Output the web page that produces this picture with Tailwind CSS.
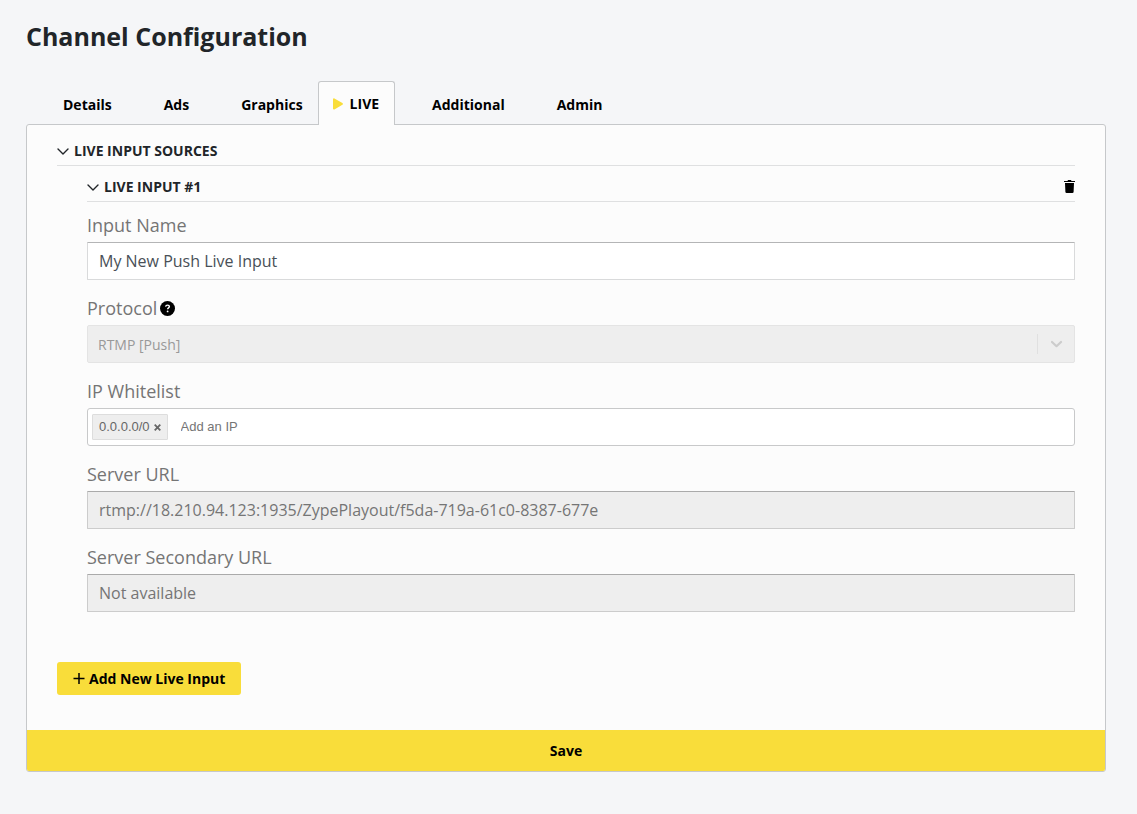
<!DOCTYPE html>
<html lang="en">
<head>
<meta charset="utf-8">
<meta name="viewport" content="width=device-width, initial-scale=1">
<title>Channel Configuration</title>
<script src="https://cdn.jsdelivr.net/npm/@tailwindcss/browser@4"></script>
</head>
<body class="min-h-screen bg-[#f5f6f8] font-['Open_Sans',sans-serif] text-sm text-[#212529]">
<main class="pt-5 pr-[31px] pb-10 pl-[26px]">
  <h1 class="text-[25px] leading-8 font-bold">Channel Configuration</h1>

  <nav class="relative z-10 mt-[29px] -mb-px flex items-end" aria-label="Channel sections">
    <a href="#details" class="ml-[22px] px-[15px] pb-2 leading-6 font-bold text-black">Details</a>
    <a href="#ads" class="ml-[22px] px-[15px] pb-2 leading-6 font-bold text-black">Ads</a>
    <a href="#graphics" class="ml-[22px] px-[15px] pb-2 leading-6 font-bold text-black">Graphics</a>
    <a href="#live" aria-current="page" class="flex items-center gap-[7px] rounded-t-[3px] border border-b-0 border-[#c6c8ca] bg-[#fcfcfc] pl-3.5 pr-[15px] pt-2.5 pb-[9px] leading-6 font-bold text-black">
      <svg class="h-3 w-2.5" viewBox="0 0 10 12" fill="#f9dd3a" aria-hidden="true"><path d="M0 1.2C0 .4.8.2 1.4.5l8 4.600c.7.4.7 1.300 0 1.700l-8 4.600c-.6.4-1.400.1-1.400-.6z"/></svg>
      LIVE
    </a>
    <a href="#additional" class="ml-[22px] px-[15px] pb-2 leading-6 font-bold text-black">Additional</a>
    <a href="#admin" class="ml-[22px] px-[15px] pb-2 leading-6 font-bold text-black">Admin</a>
  </nav>

  <form class="overflow-hidden rounded-[3px] border border-[#c6c8ca] bg-[#fcfcfc]">
    <div class="px-[30px] pt-[11px] pb-[35px]">
      <h2 class="border-b border-[#dfe0e1] pt-1 pb-[3px]">
        <button type="button" aria-expanded="true" class="flex items-center gap-[5px] leading-[22px] font-bold">
          <svg class="h-3 w-3" viewBox="0 0 12 12" fill="none" stroke="#212529" stroke-width="1.4" stroke-linecap="round" stroke-linejoin="round" aria-hidden="true"><path d="M1 4l5 5 5-5"/></svg>
          LIVE INPUT SOURCES
        </button>
      </h2>

      <section class="pl-[30px]">
        <div class="flex items-center justify-between border-b border-[#dfe0e1] pt-2.5 pb-[3px]">
          <h3>
            <button type="button" aria-expanded="true" class="flex items-center gap-[5px] leading-[22px] font-bold">
              <svg class="h-3 w-3" viewBox="0 0 12 12" fill="none" stroke="#212529" stroke-width="1.4" stroke-linecap="round" stroke-linejoin="round" aria-hidden="true"><path d="M1 4l5 5 5-5"/></svg>
              LIVE INPUT #1
            </button>
          </h3>
          <button type="button" aria-label="Delete live input" class="pb-0.5">
            <svg class="h-[13px] w-[11px]" viewBox="0 0 11 13" aria-hidden="true"><path d="M0 .9h3.500L4 .1h3l.5.800H11v1.200H0zM1 3h9l-.4 8.900q-.1 1.100-1.200 1.100H2.600q-1.100 0-1.200-1.100z"/></svg>
          </button>
        </div>

        <div class="mt-3 flex flex-col gap-[17px] text-[#757575]">
          <div>
            <label for="name" class="mb-1.5 block text-lg leading-[22px]">Input Name</label>
            <input id="name" type="text" value="My New Push Live Input" class="block h-[38px] w-full rounded-[1px] border border-[#d9dadb] border-t-[#b4b5b6] bg-white px-[11px] text-base text-[#495057]">
          </div>
          <div>
            <div class="mb-1.5 flex items-center gap-[3px]">
              <label for="protocol" class="text-lg leading-[22px]">Protocol</label>
              <button type="button" aria-label="Protocol help" class="pt-px">
                <svg class="h-[15px] w-[15px]" viewBox="0 0 15 15" aria-hidden="true"><circle cx="7.500" cy="7.500" r="7.500"/><path d="M5.600 5.700c.2-1.100.9-1.600 1.900-1.600 1.100 0 1.900.6 1.900 1.500 0 1.300-1.800 1.300-1.800 2.700" fill="none" stroke="#fff" stroke-width="1.400"/><circle cx="7.600" cy="10.400" r=".9" fill="#fff"/></svg>
              </button>
            </div>
            <div class="relative">
              <select id="protocol" disabled class="block h-[38px] w-full appearance-none rounded-[2px] border border-[#e4e4e4] bg-[#eeeeee] px-2.5 pt-0.5 text-sm text-[#999999] opacity-100"><option>RTMP [Push]</option></select>
              <span class="pointer-events-none absolute inset-y-[9px] right-0 flex w-[38px] items-center justify-center border-l border-[#e0e0e0]">
                <svg class="h-3 w-3" viewBox="0 0 12 12" fill="none" stroke="#cccccc" stroke-width="2.200" stroke-linecap="round" stroke-linejoin="round" aria-hidden="true"><path d="M1 4l4.500 4.200L10 4"/></svg>
              </span>
            </div>
          </div>
          <div>
            <label for="ip" class="mb-1.5 block text-lg leading-[22px]">IP Whitelist</label>
            <div class="flex h-[38px] items-center rounded-[3px] border border-[#c8c9ca] bg-white px-1 font-['Liberation_Sans',sans-serif] text-[13px]">
              <span class="flex h-[26px] items-center gap-1 rounded-[1px] border border-[#dddddd] bg-[#eeeeee] px-1.5 text-[#666666]">0.0.0.0/0
                <button type="button" aria-label="Remove 0.0.0.0/0"><svg class="h-[7px] w-[7px]" viewBox="0 0 7 7" stroke="#666" stroke-width="1.800" aria-hidden="true"><path d="M.7.7l5.600 5.600M6.300.7L.7 6.300"/></svg></button>
              </span>
              <input id="ip" type="text" placeholder="Add an IP" class="ml-[13px] min-w-0 flex-1 bg-transparent placeholder:text-[#757575]">
            </div>
          </div>
          <div>
            <label for="url" class="mb-1.5 block text-lg leading-[22px]">Server URL</label>
            <input id="url" type="text" disabled value="rtmp://18.210.94.123:1935/ZypePlayout/f5da-719a-61c0-8387-677e" class="block h-[38px] w-full rounded-[1px] border border-[#cccccc] border-t-[#aaaaaa] bg-[#eeeeee] px-[11px] text-base text-[#757575]">
          </div>
          <div>
            <label for="url2" class="mb-1.5 block text-lg leading-[22px]">Server Secondary URL</label>
            <input id="url2" type="text" disabled value="Not available" class="block h-[38px] w-full rounded-[1px] border border-[#cccccc] border-t-[#aaaaaa] bg-[#eeeeee] px-[11px] text-base text-[#757575]">
          </div>
        </div>
      </section>

      <button type="button" class="mt-[50px] flex h-[33px] items-center gap-1 rounded-[3px] bg-[#f9dd3a] px-4 font-bold text-black">
        <svg class="h-3 w-3" viewBox="0 0 12 12" fill="none" stroke="#000" stroke-width="1.500" aria-hidden="true"><path d="M.5 5.500h11M6 0v11"/></svg>
        Add New Live Input
      </button>
    </div>
    <button type="submit" class="block h-[41px] w-full bg-[#f9dd3a] font-bold text-black">Save</button>
  </form>
</main>
</body>
</html>
